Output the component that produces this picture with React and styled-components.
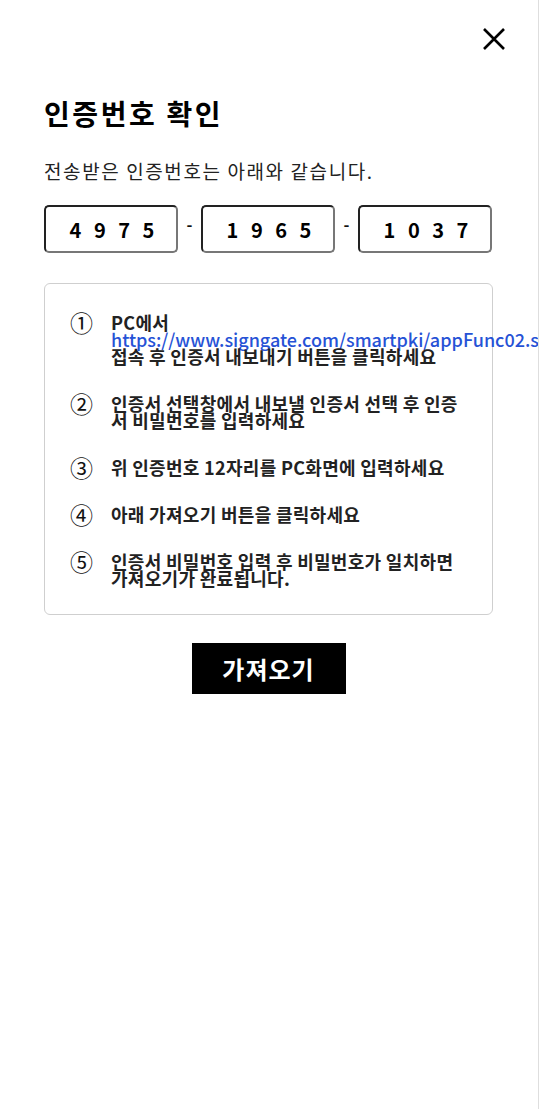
import React from 'react'
import styled, { createGlobalStyle } from 'styled-components'

const GlobalStyle = createGlobalStyle`
    html, body {
        margin: 0;
        padding: 0;
        background: #fff;
    }
    body {
        font-family: "Noto Sans CJK KR", "Noto Sans", sans-serif;
        color: #111;
        overflow: hidden;
    }
`

const codes = ['4975', '1965', '1037']

const steps = [
    { num: '①', lines: ['PC에서'], link: 'https://www.signgate.com/smartpki/appFunc02.sg', rest: '접속 후 인증서 내보내기 버튼을 클릭하세요' },
    { num: '②', lines: ['인증서 선택창에서 내보낼 인증서 선택 후 인증서 비밀번호를 입력하세요'] },
    { num: '③', lines: ['위 인증번호 12자리를 PC화면에 입력하세요'] },
    { num: '④', lines: ['아래 가져오기 버튼을 클릭하세요'] },
    { num: '⑤', lines: ['인증서 비밀번호 입력 후 비밀번호가 일치하면 가져오기가 완료됩니다.'] },
]

function App() {
    return (
        <Page>
            <GlobalStyle />
            <TopBar>
                <CloseButton aria-label="닫기">
                    <svg width="24" height="24" viewBox="0 0 24 24" fill="none" stroke="#000" strokeWidth="2.6" strokeLinecap="butt">
                        <path d="M2 2 L22 22 M22 2 L2 22" />
                    </svg>
                </CloseButton>
            </TopBar>
            <Content>
                <Title>인증번호 확인</Title>
                <Subtitle>전송받은 인증번호는 아래와 같습니다.</Subtitle>
                <CodeRow>
                    {codes.map((code, i) => (
                        <React.Fragment key={code}>
                            {i > 0 && <Dash>-</Dash>}
                            <CodeBox>{code.split('').join(' ')}</CodeBox>
                        </React.Fragment>
                    ))}
                </CodeRow>
                <GuideBox>
                    {steps.map(step => (
                        <Step key={step.num}>
                            <StepNum>{step.num}</StepNum>
                            <StepText>
                                {step.lines.map(line => <span key={line}>{line}</span>)}
                                {step.link && <StepLink href="#">{step.link}</StepLink>}
                                {step.rest && <span>{step.rest}</span>}
                            </StepText>
                        </Step>
                    ))}
                </GuideBox>
                <ButtonRow>
                    <ImportButton>가져오기</ImportButton>
                </ButtonRow>
            </Content>
        </Page>
    )
}

export default App

const Page = styled.div`
    width: 538px;
    min-height: 100vh;
    border-right: 1px solid #dedede;
    overflow: hidden;
`

const TopBar = styled.div`
    display: flex;
    justify-content: flex-end;
    padding: 27px 32px 0 0;
`

const CloseButton = styled.button`
    border: 0;
    background: none;
    padding: 0;
    width: 24px;
    height: 24px;
    cursor: pointer;
    svg {
        display: block;
    }
`

const Content = styled.div`
    padding: 0 45px 0 44px;
`

const Title = styled.h1`
    margin: 42px 0 0;
    font-size: 28px;
    font-weight: 700;
    line-height: 40px;
    letter-spacing: 2.6px;
    color: #000;
`

const Subtitle = styled.p`
    margin: 24px 0 0;
    font-size: 19px;
    line-height: 28px;
    letter-spacing: 1.6px;
    color: #222;
`

const CodeRow = styled.div`
    display: flex;
    align-items: center;
    margin-top: 20px;
`

const CodeBox = styled.div`
    width: 134px;
    height: 48px;
    box-sizing: border-box;
    border: 2px solid #777;
    border-top-color: #222;
    border-left-color: #222;
    border-radius: 5px;
    display: flex;
    align-items: center;
    justify-content: center;
    font-size: 20px;
    font-weight: 700;
    letter-spacing: 4px;
    padding-left: 6px;
    color: #000;
    white-space: pre;
`

const Dash = styled.span`
    width: 23px;
    text-align: center;
    font-size: 16px;
    font-weight: 700;
    margin-top: -10px;
`

const GuideBox = styled.div`
    margin-top: 30px;
    border: 1px solid #cfcfcf;
    border-radius: 6px;
    padding: 30px 0 27px 25px;
    display: flex;
    flex-direction: column;
    gap: 30px;
`

const Step = styled.div`
    display: flex;
    align-items: flex-start;
`

const StepNum = styled.span`
    width: 41px;
    flex-shrink: 0;
    font-size: 23px;
    line-height: 17px;
    color: #111;
`

const StepText = styled.div`
    width: 350px;
    display: flex;
    flex-direction: column;
    font-size: 18px;
    font-weight: 700;
    line-height: 17px;
    letter-spacing: 0.3px;
    color: #222;
    word-break: break-all;
`

const StepLink = styled.a`
    color: #2652d6;
    font-weight: 500;
    letter-spacing: 0;
    text-decoration: none;
    white-space: nowrap;
    word-break: normal;
`

const ButtonRow = styled.div`
    display: flex;
    justify-content: center;
    margin-top: 28px;
`

const ImportButton = styled.button`
    width: 154px;
    height: 51px;
    border: 0;
    border-radius: 0;
    background: #000;
    color: #fff;
    font-family: inherit;
    font-size: 24px;
    font-weight: 700;
    letter-spacing: 1px;
    cursor: pointer;
`
